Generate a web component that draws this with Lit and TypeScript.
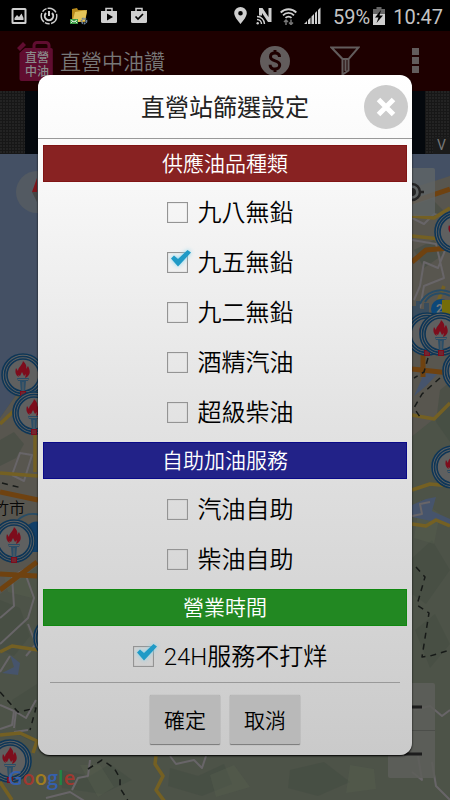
import { LitElement, html, svg, css, nothing } from "lit";
import { customElement, property } from "lit/decorators.js";

const fontStack = css`Roboto, "Noto Sans CJK TC", sans-serif`;

@customElement("status-bar")
class StatusBar extends LitElement {
  static styles = css`
    :host {
      display: flex;
      align-items: center;
      height: 31px;
      padding: 0 7px 0 4px;
      background: #000;
      color: #c4c4c4;
      font: 20px/32px ${fontStack};
    }
    .notes,
    .system {
      display: flex;
      align-items: center;
    }
    .system {
      margin-left: auto;
    }
    .cell {
      display: flex;
      justify-content: center;
      width: 30px;
    }
    .narrow {
      width: 24px;
    }
    .level {
      margin: 0 3px 0 9px;
    }
    .level,
    .clock {
      padding-top: 2px;
    }
    .clock {
      margin-left: 8px;
    }
  `;

  render() {
    return html`
      <div class="notes">
        <span class="cell"><svg width="16" height="18" viewBox="0 0 16 18">
          <path fill="#cfcfcf" fill-rule="evenodd" d="M2 1h12a1.500 1.500 0 0 1 1.500 1.500v13a1.500 1.500 0 0 1-1.500 1.500h-12a1.500 1.500 0 0 1-1.500-1.500v-13a1.500 1.500 0 0 1 1.500-1.500zM2.500 3v12h11v-12z"/>
          <path fill="#cfcfcf" d="M3.500 13v-2l2.500-3 2 2 2.500-3.500 2 4.500v2z"/></svg></span>
        <span class="cell"><svg width="18" height="18" viewBox="0 0 18 18" fill="none" stroke="#cfcfcf">
          <circle cx="9" cy="9" r="7.800" stroke-width="1.400" stroke-dasharray="10 1.500 5 1"/>
          <path stroke-width="2" d="M6 6a4.200 4.200 0 1 0 6 0M9 4v5"/></svg></span>
        <span class="cell"><svg width="18" height="18" viewBox="0 0 18 18">
          <path fill="#b88a1c" d="M2 2l5-1 1 2h7l2 2-2 10h-13z"/>
          <path fill="#e6c65a" d="M5 5l12-2-2 11-13 2z"/>
          <path fill="#3d9a45" d="M0 12h8v5h-8z"/><path stroke="#d9f0d9" fill="none" d="M1 13l3 2 3-2M1 16l2-2M7 16l-2-2"/>
          <circle cx="14" cy="14" r="2.400" fill="none" stroke="#6d8298" stroke-width="2" stroke-dasharray="1.500 .6"/></svg></span>
        <span class="cell"><svg width="16" height="17" viewBox="0 0 16 17">
          <path fill="none" stroke="#cfcfcf" stroke-width="1.500" d="M5 4v-2.500h6v2.500"/>
          <path fill="#cfcfcf" d="M0 4h16v10.500a1.500 1.500 0 0 1-1.500 1.500h-13a1.500 1.500 0 0 1-1.500-1.500z"/><path d="M6 6.500l6 3.500-6 3.500z"/></svg></span>
        <span class="cell"><svg width="16" height="17" viewBox="0 0 16 17">
          <path fill="none" stroke="#cfcfcf" stroke-width="1.500" d="M5 4v-2.500h6v2.500"/>
          <path fill="#cfcfcf" d="M0 4h16v10.500a1.500 1.500 0 0 1-1.500 1.500h-13a1.500 1.500 0 0 1-1.500-1.500z"/><path fill="none" stroke="#000" stroke-width="1.700" d="M4.500 9.500l2.500 2.500 5-5"/></svg></span>
      </div>
      <div class="system">
        <span class="cell narrow"><svg width="13" height="17" viewBox="0 0 13 17">
          <path fill="#cfcfcf" fill-rule="evenodd" d="M6.500 0a6.300 6.300 0 0 1 6.300 6.300c0 4-6.300 10.700-6.300 10.700s-6.300-6.700-6.300-10.700a6.300 6.300 0 0 1 6.300-6.300zM6.500 4a2.300 2.300 0 1 0 0 4.600 2.300 2.300 0 0 0 0-4.600z"/></svg></span>
        <span class="cell narrow"><svg width="17" height="18" viewBox="0 0 17 18">
          <path fill="#cfcfcf" d="M3 1h3.500l6 9v-9h3v14h-3.500l-6-9v2.500h-3z"/>
          <g fill="none" stroke="#cfcfcf" stroke-width="1.400"><path d="M1 9.500a7.500 7.500 0 0 1 7.500 7.500M1 12.500a4.500 4.500 0 0 1 4.500 4.500"/></g><circle cx="1.700" cy="16.300" r="1.200" fill="#cfcfcf"/></svg></span>
        <span class="cell narrow"><svg width="17" height="18" viewBox="0 0 17 18">
          <g fill="none" stroke="#cfcfcf" stroke-width="1.800"><path d="M.7 5.500a11 11 0 0 1 15.600 0M3 8.300a7.600 7.600 0 0 1 11 0M5.500 10.800a4.200 4.200 0 0 1 6 0"/></g>
          <path fill="none" stroke="#777" stroke-width="1.500" d="M6 18v-4.500M4 15l2-2 2 2M11 12.500v4M9 15.500l2 2 2-2"/></svg></span>
        <span class="cell narrow"><svg width="17" height="18" viewBox="0 0 17 18">
          <path fill="#cfcfcf" d="M0 17l3-3v3zM4 17v-4l2.500-2.500v6.500zM7.500 17v-7.500l2.500-2.500v10zM11 17v-11l2-2v13zM14 17v-14l2.500-2.500v16.500z"/></svg></span>
        <span class="level">59%</span>
        <svg width="12" height="18" viewBox="0 0 12 18">
          <path fill="#666" d="M3.500 0h5v2h3.500v5h-12v-5h3.500z"/><path fill="#cfcfcf" d="M0 7h12v11h-12z"/>
          <path d="M8 3l-6 7.500h3.500l-2 5.500 6.500-7.500h-3.500z"/></svg>
        <span class="clock">10:47</span>
      </div>
    `;
  }
}

@customElement("app-bar")
class AppBar extends LitElement {
  static styles = css`
    :host {
      display: flex;
      align-items: center;
      height: 60px;
      padding-left: 17px;
      background: #1e0000;
      color: #777;
    }
    .logo text {
      font: 500 12px ${fontStack};
      fill: #8b8b8b;
    }
    h1 {
      flex: 1;
      margin: 0 0 0 7px;
      padding-top: 2px;
      font: 350 21px/30px ${fontStack};
      white-space: nowrap;
    }
    button {
      display: flex;
      justify-content: center;
      width: 70px;
      padding: 0;
      border: 0;
      background: none;
    }
  `;

  render() {
    return html`
      <svg class="logo" width="36" height="40" viewBox="0 0 36 40">
        <path fill="#600d30" d="M0 7l6-6 3 3-6 6zM5 9.500l3-2.500h26a1.800 1.800 0 0 1 1.800 1.800v29.200a2 2 0 0 1-2 2h-29.300a2 2 0 0 1-2-2v-26z"/>
        <path fill="none" stroke="#600d30" stroke-width="3" d="M17 8v-3.500a3 3 0 0 1 3-3h9a3 3 0 0 1 3 3v3.500"/>
        <text x="8" y="21">直營</text><text x="8" y="35">中油</text>
      </svg>
      <h1>直營中油讚</h1>
      <button aria-label="油價"><svg width="30" height="30" viewBox="0 0 30 30">
        <circle cx="15" cy="15" r="15" fill="#625c5c"/>
        <path fill="none" stroke="#1e0000" stroke-width="3" d="M19.500 11c0-3-2-4-4.500-4s-4.500 1.300-4.500 3.700c0 5.300 9.200 3 9.200 8.300 0 2.600-2.200 4-4.700 4s-4.900-1.200-4.900-4.300M15 4v4M15 22v4"/></svg></button>
      <button aria-label="篩選"><svg width="30" height="30" viewBox="0 0 30 30">
        <path fill="none" stroke="#625c5c" stroke-width="2" d="M1.500 1.500h27l-10 11.500v11.500l-6 4v-15.500zM12 13h7M15.500 14v11"/></svg></button>
      <button aria-label="更多"><svg width="7" height="26" viewBox="0 0 7 26">
        <path fill="#625c5c" d="M0 0h7v7h-7zM0 9h7v7h-7zM0 18h7v7h-7z"/></svg></button>
    `;
  }
}

const markers: [number, number][] = [
  [23, 375], [34, 413], [55, 638], [14, 541], [10, 761],
  [456, 232], [427, 334], [441, 334], [464, 371], [453, 467],
];

@customElement("station-map")
class StationMap extends LitElement {
  static styles = css`
    :host {
      display: block;
      position: relative;
      overflow: hidden;
      background: #4d5348;
    }
    .canvas {
      position: absolute;
      inset: 0;
      width: 100%;
      height: 100%;
    }
    .city {
      font: 350 16px ${fontStack};
      fill: #080808;
    }
    .badge {
      font: bold 12px ${fontStack};
      fill: #777;
    }
    .brand {
      font: 600 20px "Open Sans", sans-serif;
    }
  `;

  private marker(x: number, y: number) {
    return svg`<g transform="translate(${x} ${y})">
      <circle r="21.500" fill="#5f6060"/>
      <g fill="none" stroke="#0e3657" stroke-width="1.600"><circle r="21"/><circle r="18.500"/><circle r="16"/></g>
      <path fill="#7d0d1c" d="M-4 2c-4-2-4-6-3-9l2 3c0-4 4-5 5-10 3 3 4 5 3 8l2-3c2 4 3 8-1 11l-2 1 1-4-2 2-2-4-2 4-2-1z"/>
      <path fill="#2b4d66" d="M-6 3h12l-1 3h-2l-1 12h-4l-1-12h-2z"/>
      <path stroke="#5f6060" stroke-width="1" d="M-5 4.500h10M0 7v9"/>
      <path fill="#7d0d1c" d="M-3 16h6v6h-6z"/><path stroke="#5f6060" stroke-width=".6" d="M-2 18h4M-2 20h4"/>
    </g>`;
  }

  render() {
    return html`
      <svg class="canvas" viewBox="0 154 450 646" preserveAspectRatio="xMinYMin slice">
        <path fill="#445064" d="M0 154h450v22l-38 16-372 175-22 25-18 26z"/>
        <path fill="#58564f" d="M0 418l17-24 23-10v180l-40 30zM400 192l50-16v230l-50 40z"/>
        <g fill="#454d42" opacity=".6">
          <path d="M0 440l14-8 10 12-8 14-16 8zM414 205l18-6 12 12-14 8-16-4zM414 250l20-10 10 14-20 14zM440 390l10-8v60l-14-20z"/>
          <path d="M0 600l20 8 10 28-16 20-14-6zM12 700l25-16v60l-20-10zM410 560l22-20 18 30-24 34-14-10zM415 630l20-16 15 30-20 24z"/>
          <path d="M60 770l30 6 20-12 22 16-30 14-40-6zM170 768l28 8 26-12 8 20-30 12-34-10zM290 770l34-8 26 20-32 14-30-8z"/>
        </g>
        <g fill="#59604f" opacity=".35">
          <path d="M80 765l20 0 14 22-16 10zM210 775l24-10 16 22-34 10zM350 765l24 4 2 20-30 4zM420 500l20 14-6 30-20-6zM2 570l24 4 6 24-24-6z"/>
        </g>
        <path fill="#46546c" d="M412 505l14-6 10-2-4 14 18 8v6l-38-8zM10 655l10 8-2 12-16-2 12-6zM424 374l18-5-16 17-12 10z"/>
        <g fill="none" stroke-linejoin="round">
          <g stroke="#686568" stroke-width="2">
            <path d="M412 218l12 6 10-10 14 4M414 300l6-14 4-24 14 6 8-20M412 240l24 4 8 34-20 8-4 22"/>
            <path d="M12 475l8-22 12 2-8 26-12-6M0 618l14-12-2-30 12-6 10 28-6 20-28 26M28 624l8 20-10 12M0 705l14 6-2 14-12 4M0 672l10-16M36 700l-10 18-10-6-2 16"/>
            <path d="M28 730l-14 2M72 790l6-12 10-2 2-16M46 798l24-6 16 10M170 756l6 8 18-4 8 8 4-12M412 516l10-2-2-10 10-2M412 772l10 8-4-24M432 762l4 24 14 14M414 710l16-4 12 10 8-6"/>
          </g>
          <g stroke="#746023" stroke-width="3.500">
            <path d="M0 424l17-16 4-16M0 473l38 3M35 392v80M412 216l22 2 16-10M412 236l38 4M430 322l14-36M412 415l22 4 16-16"/>
            <path d="M0 652l12-6 26 4M0 735l20-2 17 8-4 12M0 782l12 18M412 490l18-6 20 2M412 524l14 2 10-6 14 6M156 756l-1 8 8 12-7 14 9 12"/>
          </g>
          <g stroke="#6f4210" stroke-width="5">
            <path d="M0 492l38 8M0 574l37 2M0 590l37-28M400 206l50-17M412 262l14-12 24-2M423 355v22M412 369l38 4"/>
          </g>
          <g stroke="#171a18" stroke-width="1.500" stroke-dasharray="6 5">
            <path d="M2 483l20 5M0 692l18 20 18-4-6 22M428 358l-4 14-10 6M440 378l-18 16-8 14 8 12M416 567l9 10-8 28 12 8-7 44 8-1 20-6"/>
            <path d="M88 769l14-9 12 8 6 10v10l10 16"/>
          </g>
        </g>
        <path fill="#123f68" d="M26 528a12 12 0 0 1 14-6v30h-10z"/>
        <g fill="none" stroke="#274c66" stroke-width="2"><path d="M18 520a22 22 0 0 1 22-5M420 304a23 23 0 0 1 30-12M425 302a18 18 0 0 1 25-6"/></g>
        <path fill="#2b4964" opacity=".7" d="M412 322v-16h4v-5h4v8h4v-6h5v19z"/>
        <circle cx="441" cy="309" r="10" fill="#0c4779"/><text class="badge" x="436" y="313">2</text>
        <path fill="#756d0a" d="M442 300h8v14h-8z"/>
        ${markers.map(([x, y]) => this.marker(x, y))}
        <circle cx="37" cy="192" r="21" fill="#535a62"/><path fill="#7d151b" d="M32 192l5-14v14z"/><path fill="#454646" d="M32 192h5v10z"/>
        <rect x="388" y="168" width="47" height="48" rx="2" fill="#606566" opacity=".8"/>
        <path fill="none" stroke="#242424" stroke-width="2.500" d="M412 184a8 8 0 0 1 0 16M419 192h5"/><circle cx="412" cy="192" r="4" fill="#242424"/>
        <rect x="388" y="683" width="47" height="95" rx="2" fill="#5d5f5a" opacity=".88"/>
        <path stroke="#4c4e4a" d="M388 730.500h47"/>
        <path stroke="#1d1d1d" stroke-width="3" d="M404 707h18M404 754h18"/>
        <text class="city" x="-7" y="514">竹市</text>
        <text class="brand" x="8" y="785"><tspan fill="#3560ad">G</tspan><tspan fill="#a03830">o</tspan><tspan fill="#a07c20">o</tspan><tspan fill="#3560ad">g</tspan><tspan fill="#238542">l</tspan><tspan fill="#a03830">e</tspan></text>
      </svg>
    `;
  }
}

@customElement("option-row")
class OptionRow extends LitElement {
  @property() label = "";
  @property({ type: Boolean }) checked = false;

  static styles = css`
    :host {
      display: block;
    }
    label {
      display: flex;
      align-items: center;
      justify-content: center;
      gap: 10px;
      height: 50px;
      padding-left: 10px;
      color: #000;
      font: 350 24px/36px ${fontStack};
      white-space: nowrap;
    }
    .name {
      padding-top: 2px;
    }
    .box {
      display: flex;
      position: relative;
    }
    input {
      appearance: none;
      box-sizing: border-box;
      width: 21px;
      height: 21px;
      margin: 0;
      border: 1px solid #949494;
      box-shadow: inset 0 0 1px #949494;
    }
    .tick {
      position: absolute;
      left: 2px;
      top: -3px;
      overflow: visible;
      pointer-events: none;
      filter: drop-shadow(0 0 2px #7fd4f0);
    }
  `;

  private toggle(e: Event) {
    this.checked = (e.target as HTMLInputElement).checked;
  }

  render() {
    return html`<label>
      <span class="box">
        <input type="checkbox" .checked=${this.checked} @change=${this.toggle} />
        ${this.checked
          ? html`<svg class="tick" width="22" height="18" viewBox="0 0 22 18"><path fill="#1f9ac6" d="M2 9.500l3-3 4 3.500 9.500-9 3.500 2.500-13 14z"/></svg>`
          : nothing}
      </span>
      <span class="name">${this.label}</span>
    </label>`;
  }
}

const sections = [
  { title: "供應油品種類", tone: "red", rows: ["九八無鉛", "九五無鉛", "九二無鉛", "酒精汽油", "超級柴油"] },
  { title: "自助加油服務", tone: "blue", rows: ["汽油自助", "柴油自助"] },
  { title: "營業時間", tone: "green", rows: ["24H服務不打烊"] },
];
const selected = new Set(["九五無鉛", "24H服務不打烊"]);

@customElement("filter-dialog")
class FilterDialog extends LitElement {
  static styles = css`
    :host {
      display: block;
      border-radius: 12px;
      background: linear-gradient(#fff, #f8f8f8 15%, #e3e3e3 50%, #cacaca);
      box-shadow: 0 1px 2px #000;
      font-family: ${fontStack};
    }
    header {
      display: grid;
      grid-template-columns: 44px 1fr 44px;
      align-items: center;
      height: 63px;
      padding: 0 4px;
      border-bottom: 1px solid #999;
    }
    h2 {
      grid-column: 2;
      margin: 0;
      padding-top: 3px;
      color: #222;
      font: 400 24px/36px ${fontStack};
      text-align: center;
      white-space: nowrap;
    }
    .close {
      display: flex;
      padding: 0;
      border: 0;
      background: none;
    }
    .sections {
      padding: 6px 5px 0;
    }
    h3 {
      box-sizing: border-box;
      height: 37px;
      margin: 0;
      padding-top: 1px;
      border: 1px solid;
      font: 350 21px/35px ${fontStack};
      text-align: center;
    }
    h3 span {
      color: #fff;
    }
    .red {
      color: #801414;
      background: #882222;
    }
    .blue {
      color: #0a0a88;
      background: #222288;
    }
    .green {
      color: #108810;
      background: #228822;
    }
    .rows {
      padding: 5px 0;
    }
    footer {
      display: flex;
      justify-content: center;
      gap: 10px;
      margin: 0 12px;
      padding: 12px 0 11px;
      border-top: 1px solid #999;
    }
    .action {
      width: 70px;
      height: 49px;
      padding: 2px 0 0;
      border: 0;
      border-radius: 1px;
      background: #b9b9b9;
      box-shadow: 0 1px 1px #777, 0 0 1px #999;
      color: #000;
      font: 350 21px/46px ${fontStack};
    }
    .sections section:last-child .rows {
      padding-bottom: 1px;
    }
  `;

  render() {
    return html`
      <header>
        <h2>直營站篩選設定</h2>
        <button class="close" aria-label="關閉"><svg width="44" height="44" viewBox="0 0 44 44">
          <circle cx="22" cy="22" r="22" fill="#cbcbcb"/>
          <path stroke="#fff" stroke-width="5" d="M14.500 14.500l15 15M29.500 14.500l-15 15"/></svg></button>
      </header>
      <div class="sections">
        ${sections.map((s) => html`<section>
          <h3 class=${s.tone}><span>${s.title}</span></h3>
          <div class="rows">
            ${s.rows.map((r) => html`<option-row .label=${r} .checked=${selected.has(r)}></option-row>`)}
          </div>
        </section>`)}
      </div>
      <footer>
        <button class="action">確定</button>
        <button class="action">取消</button>
      </footer>
    `;
  }
}

@customElement("app-root")
class AppRoot extends LitElement {
  static styles = css`
    :host {
      display: flex;
      flex-direction: column;
      position: relative;
      min-height: 100vh;
      overflow: hidden;
      background: #000;
    }
    .ad {
      display: flex;
      align-items: flex-end;
      height: 63px;
      padding-left: 25px;
      background: repeating-linear-gradient(90deg, #0000 0 2px, #171717 2px 3px),
        repeating-linear-gradient(#232323 0 2px, #171717 2px 3px);
    }
    .banner {
      flex: 1;
      align-self: stretch;
      margin-right: 8px;
      background: #04080d;
    }
    .fold {
      width: 17px;
      height: 17px;
      padding: 0;
      border: 0;
      border-radius: 3px 0 0 0;
      background: #1b1b1b;
      color: #777;
      font: 14px/17px ${fontStack};
    }
    station-map {
      flex: 1;
    }
    .layer {
      position: absolute;
      inset: 0;
      padding: 75px 38px 0;
    }
  `;

  render() {
    return html`
      <status-bar></status-bar>
      <app-bar></app-bar>
      <div class="ad">
        <div class="banner"></div>
        <button class="fold" aria-label="收合">V</button>
      </div>
      <station-map></station-map>
      <div class="layer" role="dialog" aria-label="直營站篩選設定"><filter-dialog></filter-dialog></div>
    `;
  }
}
